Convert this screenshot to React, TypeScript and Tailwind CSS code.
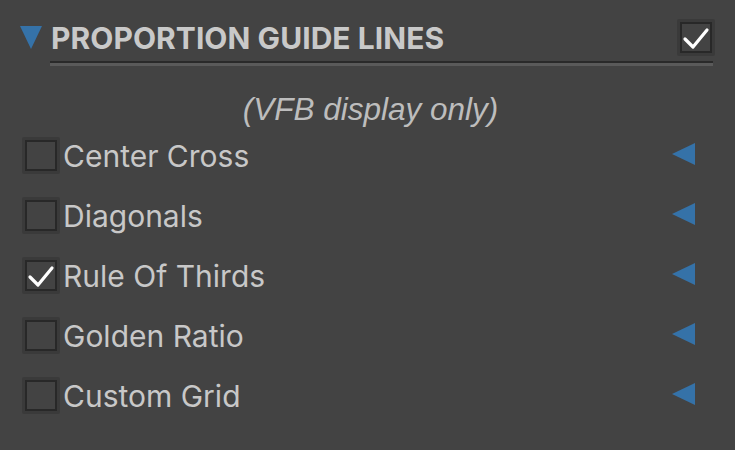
import React from "react";

const rows = [
  { label: "Center Cross", checked: false },
  { label: "Diagonals", checked: false },
  { label: "Rule Of Thirds", checked: true },
  { label: "Golden Ratio", checked: false },
  { label: "Custom Grid", checked: false },
];

function Check({ checked }: { checked: boolean }) {
  return (
    <div className="flex h-[37px] w-[38px] shrink-0 items-center justify-center rounded-[2px] bg-[#3a3a3a] p-[3px]">
      <div className="flex h-full w-full items-center justify-center border-[2px] border-[#282828] bg-[#434343]">
        {checked && (
          <svg width="28" height="24" viewBox="0 0 28 24">
            <path d="M3 13 L11 21 L25 4" fill="none" stroke="#ffffff" strokeWidth="3.2" strokeLinecap="round" strokeLinejoin="round" />
          </svg>
        )}
      </div>
    </div>
  );
}

export default function App() {
  return (
    <div className="h-[450px] w-[735px] overflow-hidden bg-[#434343] font-['Inter',sans-serif] text-[#c8c8c8]">
      {/* Section header */}
      <div className="flex items-center pl-[20px] pr-[20px] pt-[19px]">
        <svg width="22" height="23" viewBox="0 0 22 23" className="shrink-0">
          <polygon points="0,0 22,0 11,23" fill="#3572a8" />
        </svg>
        <div className="ml-[9px] text-[30px] font-bold leading-none tracking-[0.05px] text-[#c9c9c9]">
          PROPORTION GUIDE LINES
        </div>
        <div className="flex-1" />
        <Check checked={true} />
      </div>

      {/* separator */}
      <div className="ml-[50px] mr-[22px] mt-[5px]">
        <div className="h-[2px] bg-[#2a2a2a]" />
        <div className="h-[3px] bg-[#5a5a5a]" />
      </div>

      <div className="mt-[26px] pl-[6px] text-center font-['Liberation_Sans',Arial,sans-serif] text-[31.5px] italic leading-[34px] text-[#bdbdbd]">
        (VFB display only)
      </div>

      <div className="mt-[11px] flex flex-col">
        {rows.map((r) => (
          <div key={r.label} className="flex h-[60px] items-start pl-[22px] pr-[40px]">
            <Check checked={r.checked} />
            <div className="ml-[3px] mt-[1px] flex-1 text-[30px] leading-[36px]">{r.label}</div>
            <svg width="23" height="22" viewBox="0 0 23 22" className="mt-[6px] shrink-0">
              <polygon points="23,0 23,22 0,11" fill="#3572a8" />
            </svg>
          </div>
        ))}
      </div>
    </div>
  );
}
